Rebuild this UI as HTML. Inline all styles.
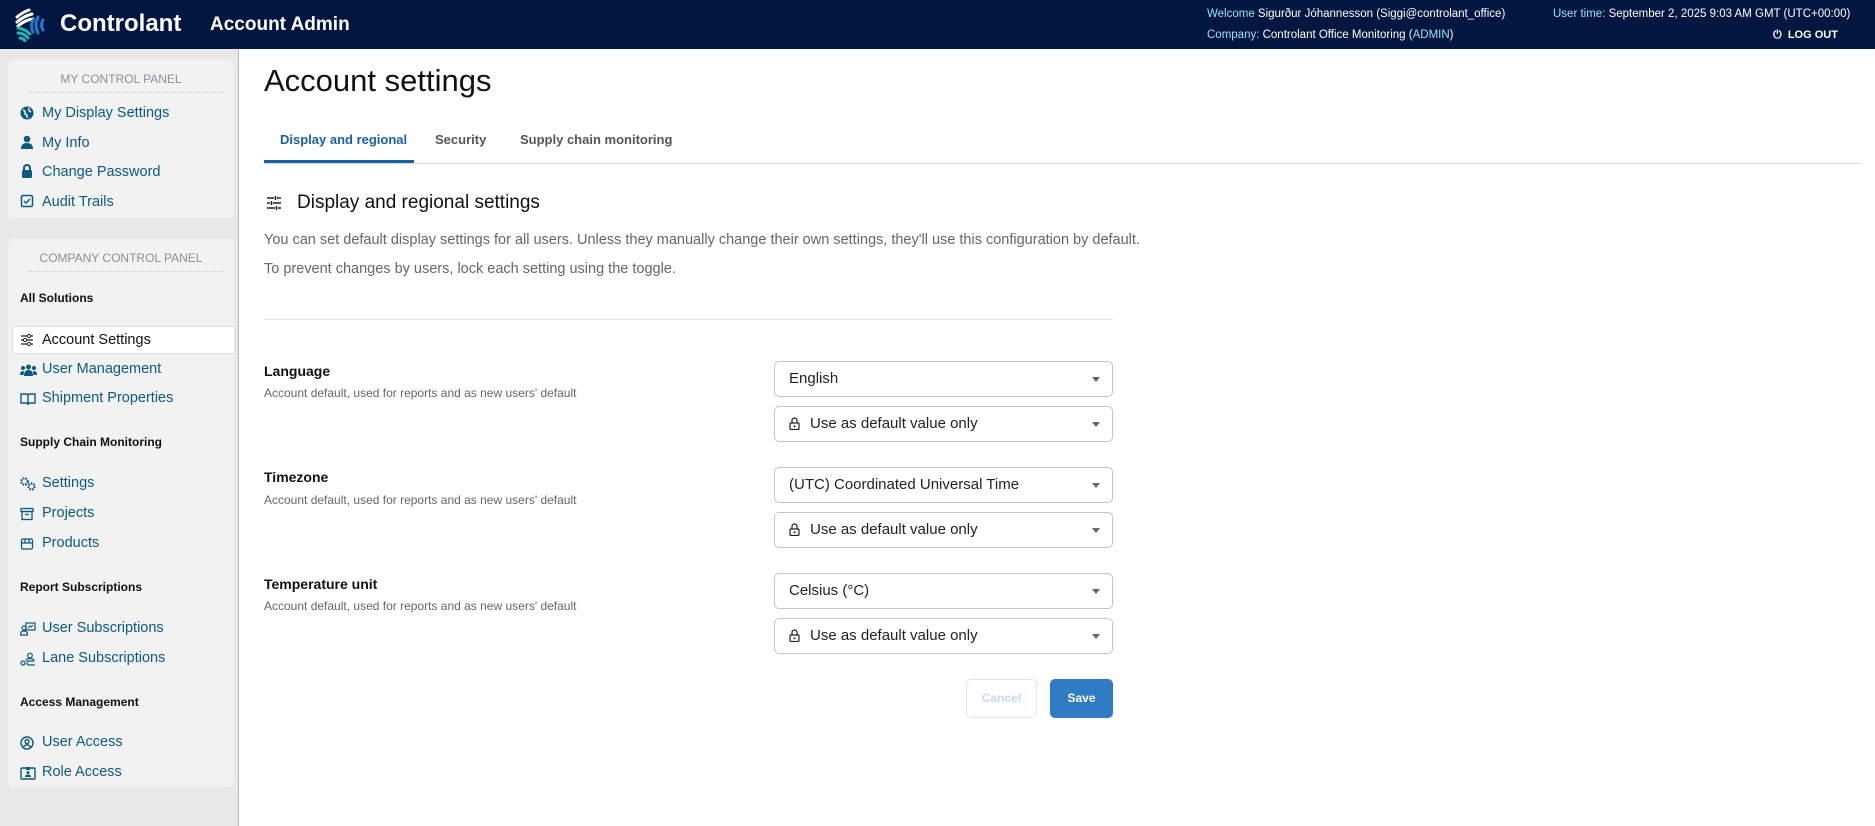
<!DOCTYPE html>
<html><head><meta charset="utf-8"><style>
*{box-sizing:border-box;margin:0;padding:0}
body{width:1875px;height:826px;overflow:hidden;font-family:"Liberation Sans",Arial,sans-serif;background:#fff;position:relative}
.hdr{position:absolute;left:0;top:0;width:1875px;height:49px;background:#011640;color:#fff}
.abs{position:absolute;white-space:nowrap}
.side{position:absolute;left:0;top:49px;width:239px;height:777px;background:#e8e8e8;border-right:1px solid #b8b8b8}
.panel{position:absolute;left:8px;width:226px;background:#f2f2f2;border-radius:6px}
.ph{position:absolute;left:0;width:100%;text-align:center;font-size:12px;color:#8a9099;}
.dot{position:absolute;left:20px;right:10px;border-top:1px dotted #ccc}
.it{position:absolute;left:34px;font-size:14.5px;color:#0b5a80;white-space:nowrap}
.ic{position:absolute;left:12px;width:14px;height:14px}
.sec{position:absolute;left:12px;font-size:12px;font-weight:bold;color:#111}
.sel{position:absolute;left:774px;width:339px;height:36px;border:1px solid #c4c4c4;border-radius:5px;font-size:15px;color:#222;padding-left:14px;line-height:34px}
.sel:after{content:"";position:absolute;right:12px;top:15px;border-left:4px solid transparent;border-right:4px solid transparent;border-top:5px solid #666}
.lbl{position:absolute;left:264px;font-size:14px;font-weight:bold;color:#111}
.sub{position:absolute;left:264px;font-size:12px;color:#666}
.lock{display:inline-block;vertical-align:-2px;margin-right:10px;width:11px;height:13px;position:relative}
</style></head><body>
<div class="hdr">
<svg class="abs" style="left:13px;top:8px" width="34" height="34" viewBox="0 0 34 34">
<g fill="none" stroke-width="3" stroke-linecap="round">
<path d="M4 9 Q10 4 16 2" stroke="#fff"/><path d="M4 14 Q11 8 19 6" stroke="#fff"/><path d="M5 18 Q12 12 20 11" stroke="#fff"/>
<path d="M20 12 Q17 18 20 24" stroke="#1f7bd0"/><path d="M25 9 Q21 17 25 25" stroke="#1f7bd0"/><path d="M30 12 Q27 17 30 22" stroke="#1f7bd0"/>
<path d="M5 20 Q12 21 17 26" stroke="#1fb8b0"/><path d="M5 25 Q11 25 15 30" stroke="#1fb8b0"/><path d="M7 30 Q10 30 12 33" stroke="#1fb8b0"/>
</g></svg>
<div class="abs" style="left:60px;top:10px;font-size:24px;font-weight:bold">Controlant</div>
<div class="abs" style="left:210px;top:14px;font-size:19px;font-weight:bold">Account Admin</div>
<div class="abs" style="left:1207px;top:8px;font-size:11.5px;color:#9fe0f0">Welcome <span style="color:#fff">Sigurður Jóhannesson (Siggi@controlant_office)</span></div>
<div class="abs" style="left:1207px;top:29px;font-size:11.5px;color:#9fe0f0">Company: <span style="color:#fff">Controlant Office Monitoring (</span>ADMIN<span style="color:#fff">)</span></div>
<div class="abs" style="left:1553px;top:8px;font-size:11.5px;color:#9fe0f0">User time: <span style="color:#fff">September 2, 2025 9:03 AM GMT (UTC+00:00)</span></div>
<div class="abs" style="left:1773px;top:29px;font-size:11px;font-weight:bold">⏻&nbsp;&nbsp;LOG OUT</div>
</div>

<div class="side">
<div class="panel" style="top:11px;height:158px">
<div class="ph" style="top:12px">MY CONTROL PANEL</div>
<div class="dot" style="top:32px"></div>
<svg class="ic" style="top:46px" viewBox="0 0 14 14"><circle cx="7" cy="7" r="6.5" fill="#0b5a80"/><path d="M3 4 Q6 5 5 8 Q8 9 7 12 M9 2 Q8 5 11 6" stroke="#f2f2f2" stroke-width="1.5" fill="none"/></svg>
<div class="it" style="top:45px">My Display Settings</div>
<svg class="ic" style="top:75px" viewBox="0 0 14 14"><circle cx="7" cy="4" r="3.3" fill="#0b5a80"/><path d="M1 14 Q1 8 7 8 Q13 8 13 14Z" fill="#0b5a80"/></svg>
<div class="it" style="top:75px">My Info</div>
<svg class="ic" style="top:104px" viewBox="0 0 14 14"><path d="M4 6 V4 A3 3 0 0 1 10 4 V6" stroke="#0b5a80" stroke-width="2" fill="none"/><rect x="2" y="6" width="10" height="8" rx="1.5" fill="#0b5a80"/></svg>
<div class="it" style="top:104px">Change Password</div>
<svg class="ic" style="top:134px" viewBox="0 0 14 14"><rect x="1.5" y="1.5" width="11" height="11" rx="1.5" stroke="#0b5a80" stroke-width="1.5" fill="none"/><path d="M4 7 L6 9 L10 5" stroke="#0b5a80" stroke-width="1.5" fill="none"/></svg>
<div class="it" style="top:134px">Audit Trails</div>
</div>

<div class="panel" style="top:190px;height:548px">
<div class="ph" style="top:12px">COMPANY CONTROL PANEL</div>
<div class="dot" style="top:32px"></div>
<div class="sec" style="top:52px">All Solutions</div>
<div style="position:absolute;left:4px;top:87px;width:222px;height:28px;background:#fff;border:1px solid #ddd;border-right:none;border-radius:4px 0 0 4px"></div>
<svg class="ic" style="top:94px" viewBox="0 0 14 14"><path d="M1 3H13M1 7H13M1 11H13" stroke="#222" stroke-width="1.2"/><circle cx="9" cy="3" r="1.6" fill="#fff" stroke="#222"/><circle cx="5" cy="7" r="1.6" fill="#fff" stroke="#222"/><circle cx="9" cy="11" r="1.6" fill="#fff" stroke="#222"/></svg>
<div class="it" style="top:93px;color:#111">Account Settings</div>
<svg class="ic" style="top:124px;width:17px" viewBox="0 0 17 14"><circle cx="8.5" cy="4" r="2.5" fill="#0b5a80"/><circle cx="3" cy="5" r="2" fill="#0b5a80"/><circle cx="14" cy="5" r="2" fill="#0b5a80"/><path d="M4 13 Q4 7 8.5 7 Q13 7 13 13Z M0 12 Q0 8 3 8 Q4 8 4 9 L3.5 12Z M17 12 Q17 8 14 8 Q13 8 13 9 L13.5 12Z" fill="#0b5a80"/></svg>
<div class="it" style="top:122px">User Management</div>
<svg class="ic" style="top:153px;width:16px" viewBox="0 0 16 14"><path d="M1 2H6Q8 2 8 4V13Q8 11 6 11H1Z M15 2H10Q8 2 8 4V13Q8 11 10 11H15Z" stroke="#0b5a80" stroke-width="1.4" fill="none"/></svg>
<div class="it" style="top:151px">Shipment Properties</div>
<div class="sec" style="top:196px">Supply Chain Monitoring</div>
<svg class="ic" style="top:238px;width:16px" viewBox="0 0 16 14"><circle cx="4.5" cy="4.5" r="3.2" fill="none" stroke="#0b5a80" stroke-width="2.2" stroke-dasharray="1.6 1"/><circle cx="11.5" cy="9.5" r="3" fill="none" stroke="#0b5a80" stroke-width="2.2" stroke-dasharray="1.6 1"/></svg>
<div class="it" style="top:236px">Settings</div>
<svg class="ic" style="top:268px" viewBox="0 0 14 14"><rect x="1" y="1.5" width="12" height="3" stroke="#0b5a80" stroke-width="1.3" fill="none"/><rect x="2" y="4.5" width="10" height="8" stroke="#0b5a80" stroke-width="1.3" fill="none"/><path d="M5 7.5H9" stroke="#0b5a80" stroke-width="1.3"/></svg>
<div class="it" style="top:266px">Projects</div>
<svg class="ic" style="top:298px" viewBox="0 0 14 14"><rect x="1.5" y="2" width="11" height="10" rx="1.5" stroke="#0b5a80" stroke-width="1.3" fill="none"/><path d="M1.5 6H12.5M5 2V6M9 2V6" stroke="#0b5a80" stroke-width="1.3"/></svg>
<div class="it" style="top:296px">Products</div>
<div class="sec" style="top:341px">Report Subscriptions</div>
<svg class="ic" style="top:383px;width:16px" viewBox="0 0 16 14"><circle cx="4" cy="6" r="2" fill="none" stroke="#0b5a80" stroke-width="1.2"/><path d="M0.5 13Q0.5 9 4 9Q7.5 9 7.5 13Z" fill="none" stroke="#0b5a80" stroke-width="1.2"/><rect x="6" y="1" width="9" height="7" stroke="#0b5a80" stroke-width="1.2" fill="none"/><path d="M8 6L10 4L11 5L13 3" stroke="#0b5a80" stroke-width="1.1" fill="none"/></svg>
<div class="it" style="top:381px">User Subscriptions</div>
<svg class="ic" style="top:413px;width:16px" viewBox="0 0 16 14"><circle cx="3" cy="11" r="2" fill="none" stroke="#0b5a80" stroke-width="1.2"/><circle cx="10" cy="3.5" r="2.3" fill="none" stroke="#0b5a80" stroke-width="1.2"/><path d="M6 9Q6 6.5 10 6.5Q14 6.5 14 9H9Q7 9 7 11Q7 13 9 13H15" fill="none" stroke="#0b5a80" stroke-width="1.2"/></svg>
<div class="it" style="top:411px">Lane Subscriptions</div>
<div class="sec" style="top:456px">Access Management</div>
<svg class="ic" style="top:497px" viewBox="0 0 14 14"><circle cx="7" cy="7" r="6" fill="none" stroke="#0b5a80" stroke-width="1.4"/><circle cx="7" cy="5.5" r="2" fill="none" stroke="#0b5a80" stroke-width="1.4"/><path d="M3.5 11Q5 8.8 7 8.8Q9 8.8 10.5 11" fill="none" stroke="#0b5a80" stroke-width="1.4"/></svg>
<div class="it" style="top:495px">User Access</div>
<svg class="ic" style="top:527px;width:16px" viewBox="0 0 16 14"><rect x="1" y="2" width="14" height="11" rx="1" stroke="#0b5a80" stroke-width="1.4" fill="none"/><path d="M6 1H10V4H6Z" fill="#0b5a80"/><circle cx="8" cy="6.5" r="1.5" fill="#0b5a80"/><path d="M5 11Q5 8.5 8 8.5Q11 8.5 11 11Z" fill="#0b5a80"/></svg>
<div class="it" style="top:525px">Role Access</div>
</div>
</div>

<div class="abs" style="left:264px;top:63px;font-size:31px;color:#111">Account settings</div>
<div class="abs" style="left:280px;top:132px;font-size:13px;font-weight:bold;color:#1a5fa8">Display and regional</div>
<div class="abs" style="left:435px;top:132px;font-size:13px;font-weight:bold;color:#555">Security</div>
<div class="abs" style="left:520px;top:132px;font-size:13px;font-weight:bold;color:#555">Supply chain monitoring</div>
<div class="abs" style="left:264px;top:163px;width:1597px;border-top:1px solid #ddd"></div>
<div class="abs" style="left:264px;top:160px;width:150px;height:3px;background:#1a5fa8"></div>

<svg class="abs" style="left:266px;top:195px" width="16" height="16" viewBox="0 0 16 16"><path d="M1 3H8M11 3H15M9.5 1V5M1 8H4M7 8H15M5.5 6V10M1 13H9M12 13H15M10.5 11V15" stroke="#222" stroke-width="1.5"/></svg>
<div class="abs" style="left:297px;top:192px;font-size:19px;color:#111">Display and regional settings</div>
<div class="abs" style="left:264px;top:232px;font-size:14.5px;color:#666">You can set default display settings for all users. Unless they manually change their own settings, they'll use this configuration by default.</div>
<div class="abs" style="left:264px;top:261px;font-size:14.5px;color:#666">To prevent changes by users, lock each setting using the toggle.</div>
<div class="abs" style="left:264px;top:319px;width:849px;border-top:1px solid #e2e2e2"></div>

<div class="lbl" style="top:363px">Language</div>
<div class="sub" style="top:386px">Account default, used for reports and as new users' default</div>
<div class="lbl" style="top:469px">Timezone</div>
<div class="sub" style="top:493px">Account default, used for reports and as new users' default</div>
<div class="lbl" style="top:576px">Temperature unit</div>
<div class="sub" style="top:599px">Account default, used for reports and as new users' default</div>

<div class="sel" style="top:361px">English</div>
<div class="sel" style="top:406px"><span class="lock"><svg width="11" height="13" viewBox="0 0 11 13"><path d="M3 6V3.5A2.5 2.5 0 0 1 8 3.5V6" stroke="#222" stroke-width="1.2" fill="none"/><rect x="1" y="6" width="9" height="6.5" rx="1" stroke="#222" stroke-width="1.2" fill="none"/><circle cx="5.5" cy="9.2" r="1" fill="#222"/></svg></span>Use as default value only</div>
<div class="sel" style="top:467px">(UTC) Coordinated Universal Time</div>
<div class="sel" style="top:512px"><span class="lock"><svg width="11" height="13" viewBox="0 0 11 13"><path d="M3 6V3.5A2.5 2.5 0 0 1 8 3.5V6" stroke="#222" stroke-width="1.2" fill="none"/><rect x="1" y="6" width="9" height="6.5" rx="1" stroke="#222" stroke-width="1.2" fill="none"/><circle cx="5.5" cy="9.2" r="1" fill="#222"/></svg></span>Use as default value only</div>
<div class="sel" style="top:573px">Celsius (°C)</div>
<div class="sel" style="top:618px"><span class="lock"><svg width="11" height="13" viewBox="0 0 11 13"><path d="M3 6V3.5A2.5 2.5 0 0 1 8 3.5V6" stroke="#222" stroke-width="1.2" fill="none"/><rect x="1" y="6" width="9" height="6.5" rx="1" stroke="#222" stroke-width="1.2" fill="none"/><circle cx="5.5" cy="9.2" r="1" fill="#222"/></svg></span>Use as default value only</div>

<div class="abs" style="left:966px;top:679px;width:71px;height:39px;border:1px solid #d6e6f5;border-radius:5px;color:#c5d9ee;font-size:12px;font-weight:bold;text-align:center;line-height:37px">Cancel</div>
<div class="abs" style="left:1050px;top:679px;width:63px;height:39px;background:#2f7cc4;border-radius:5px;color:#fff;font-size:12px;font-weight:bold;text-align:center;line-height:39px">Save</div>
</body></html>
